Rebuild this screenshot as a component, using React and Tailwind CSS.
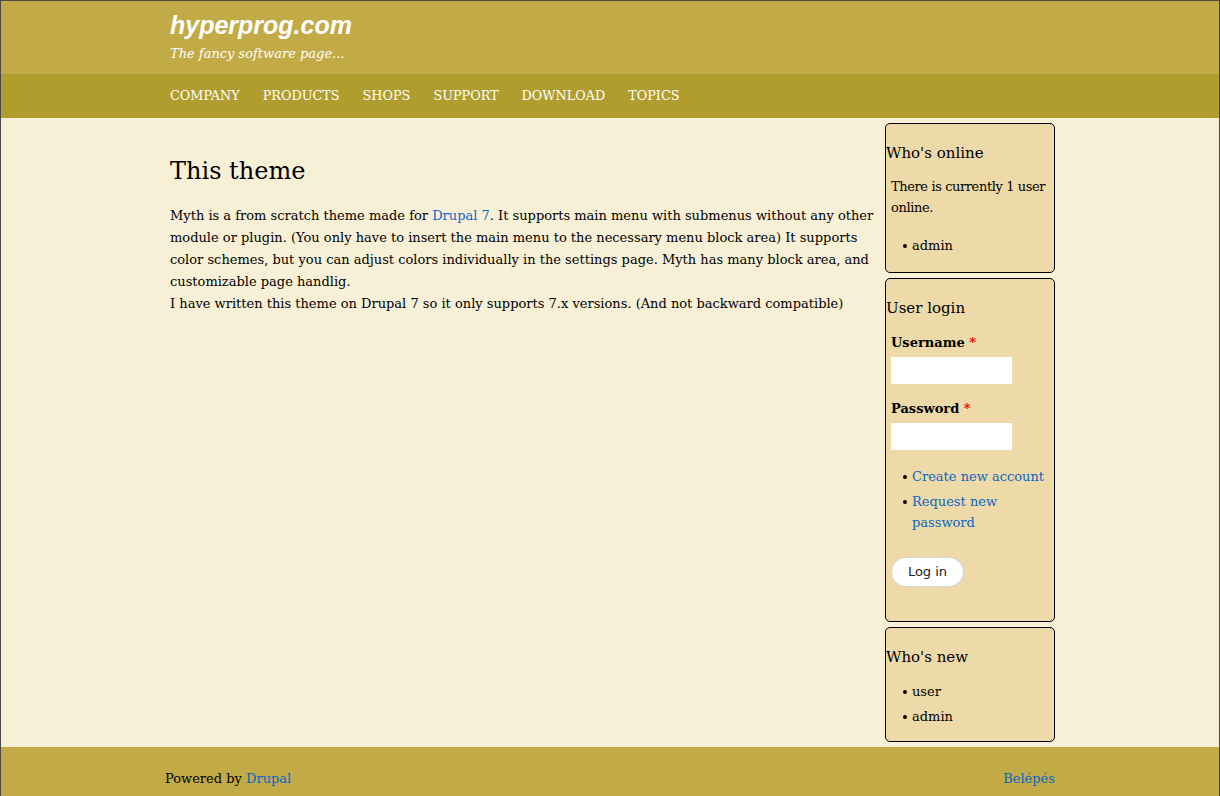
import React from 'react';

const serif = { fontFamily: '"DejaVu Serif", Georgia, serif' };

const Block = ({ title, children, className = '' }) => (
    <div className={`rounded-[5px] border border-black bg-[#eddaa8] ${className}`}>
        <h2 className="mt-[19px] text-[15px] leading-[20px] text-black">{title}</h2>
        {children}
    </div>
);

const Bullet = ({ children, className = '' }) => (
    <li className={`flex items-start gap-[5px] leading-[21px] ${className}`}>
        <span className="mt-[9px] h-[4px] w-[4px] shrink-0 rounded-full bg-black" />
        <span>{children}</span>
    </li>
);

export default function App() {
    return (
        <div className="min-h-[796px] border border-[#4a4a4a] bg-[#f8f0d6] text-[13px] text-black" style={serif}>
            {/* header */}
            <div className="h-[73px] bg-[#c2ab47]">
                <div className="mx-auto w-[890px] pl-[5px] pt-[9px]">
                    <div
                        className="text-[25px] font-bold italic leading-[30px] text-white"
                        style={{ fontFamily: '"Liberation Sans", Arial, sans-serif' }}
                    >
                        hyperprog.com
                    </div>
                    <div className="mt-[6px] text-[13px] italic leading-[16px] text-white">The fancy software page...</div>
                </div>
            </div>

            {/* nav */}
            <div className="h-[44px] bg-[#b09d2e]">
                <ul className="mx-auto flex w-[890px] items-center gap-[23px] pl-[5px] pt-[13px] text-[12.8px] leading-[18px] text-white">
                    {['COMPANY', 'PRODUCTS', 'SHOPS', 'SUPPORT', 'DOWNLOAD', 'TOPICS'].map(item => (
                        <li key={item}>{item}</li>
                    ))}
                </ul>
            </div>

            {/* body */}
            <div className="mx-auto flex w-[890px] pt-[5px]">
                <div className="w-[720px] pl-[5px] pr-[10px]">
                    <h1 className="mt-[31px] mb-[17px] text-[24px] leading-[34px]">This theme</h1>
                    <p className="leading-[22px]">
                        Myth is a from scratch theme made for <a className="text-[#0b66c4]">Drupal 7</a>. It supports main menu
                        with submenus without any other module or plugin. (You only have to insert the main menu to the
                        necessary menu block area) It supports color schemes, but you can adjust colors individually in the
                        settings page. Myth has many block area, and customizable page handlig.
                        <br />
                        I have written this theme on Drupal 7 so it only supports 7.x versions. (And not backward compatible)
                    </p>
                </div>

                <div className="flex w-[170px] flex-col gap-[5px]">
                    <Block title="Who's online" className="h-[150px]">
                        <p className="mt-[13px] px-[5px] leading-[21px] tracking-[-0.4px]">
                            <span className="whitespace-nowrap">There is currently 1 user</span> online.
                        </p>
                        <ul className="mt-[17px] pl-[17px]">
                            <Bullet>admin</Bullet>
                        </ul>
                    </Block>

                    <Block title="User login" className="h-[344px]">
                        <div className="mt-[15px] px-[5px]">
                            <label className="block font-bold leading-[20px]">
                                Username <span className="text-red-600">*</span>
                            </label>
                            <input className="mt-[4px] block h-[27px] w-[121px] bg-white outline-none" />
                            <label className="mt-[15px] block font-bold leading-[20px]">
                                Password <span className="text-red-600">*</span>
                            </label>
                            <input type="password" className="mt-[4px] block h-[27px] w-[121px] bg-white outline-none" />
                            <ul className="mt-[16px] pl-[12px] text-[#0b66c4]">
                                <Bullet>Create new account</Bullet>
                                <Bullet className="mt-[4px]">Request new password</Bullet>
                            </ul>
                            <button
                                className="mt-[24px] h-[30px] w-[73px] rounded-full border border-[#d4d4d4] bg-white text-[13px] text-[#222]"
                                style={{ fontFamily: '"DejaVu Sans", sans-serif' }}
                            >
                                Log in
                            </button>
                        </div>
                    </Block>

                    <Block title="Who's new" className="h-[115px]">
                        <ul className="mt-[14px] flex flex-col gap-[4px] pl-[17px]">
                            <Bullet>user</Bullet>
                            <Bullet>admin</Bullet>
                        </ul>
                    </Block>
                </div>
            </div>

            {/* footer */}
            <div className="mt-[5px] h-[49px] bg-[#c2ab47]">
                <div className="mx-auto flex w-[890px] justify-between pt-[22px] leading-[20px]">
                    <span>
                        Powered by <a className="text-[#0b66c4]">Drupal</a>
                    </span>
                    <a className="text-[#0b66c4]">Belépés</a>
                </div>
            </div>
        </div>
    );
}
